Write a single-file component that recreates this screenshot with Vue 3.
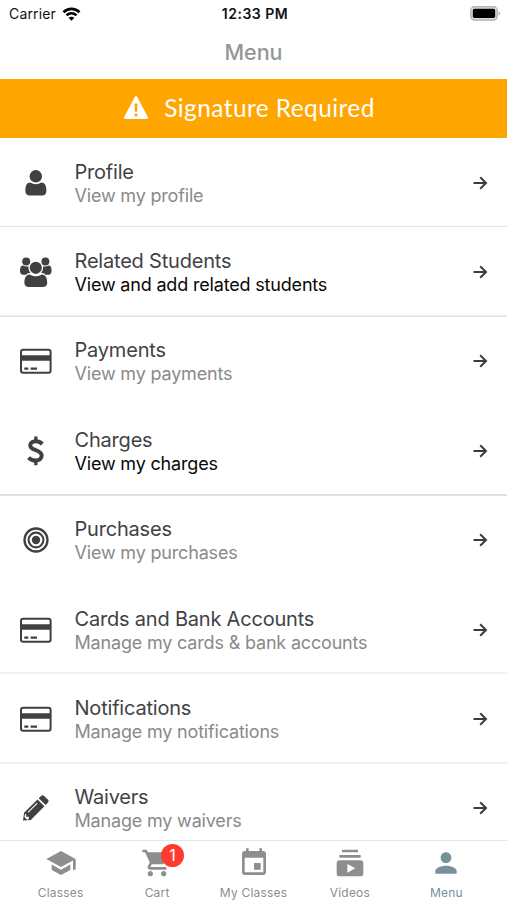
<script setup>
import { ref } from 'vue'

const items = [
  { icon: 'user', title: 'Profile', sub: 'View my profile', line: 'thin' },
  { icon: 'users', title: 'Related Students', sub: 'View and add related students', dark: true, line: 'mid' },
  { icon: 'card', title: 'Payments', sub: 'View my payments' },
  { icon: 'dollar', title: 'Charges', sub: 'View my charges', dark: true, line: 'thick' },
  { icon: 'target', title: 'Purchases', sub: 'View my purchases' },
  { icon: 'card', title: 'Cards and Bank Accounts', sub: 'Manage my cards & bank accounts', line: 'soft' },
  { icon: 'card', title: 'Notifications', sub: 'Manage my notifications', line: 'soft' },
  { icon: 'pencil', title: 'Waivers', sub: 'Manage my waivers' }
]

const tabs = [
  { name: 'Classes', path: 'M5 13.18v4L12 21l7-3.82v-4L12 17l-7-3.82zM12 3L1 9l11 6 9-4.91V17h2V9L12 3z' },
  { name: 'Cart', badge: 1, path: 'M7 18c-1.1 0-1.99.9-1.99 2S5.9 22 7 22s2-.9 2-2-.9-2-2-2zM1 2v2h2l3.6 7.59-1.35 2.45c-.16.28-.25.61-.25.96 0 1.1.9 2 2 2h12v-2H7.42c-.14 0-.25-.11-.25-.25l.03-.12.9-1.63h7.45c.75 0 1.41-.41 1.75-1.03l3.58-6.49c.08-.14.12-.31.12-.48 0-.55-.45-1-1-1H5.21l-.94-2H1zm16 16c-1.1 0-1.99.9-1.99 2s.89 2 1.99 2 2-.9 2-2-.9-2-2-2z' },
  { name: 'My Classes', path: 'M17 12h-5v5h5v-5zM16 1v2H8V1H6v2H5c-1.11 0-1.99.9-1.99 2L3 19c0 1.1.89 2 2 2h14c1.1 0 2-.9 2-2V5c0-1.1-.9-2-2-2h-1V1h-2zm3 18H5V8h14v11z' },
  { name: 'Videos', path: 'M20 8H4V6h16v2zm-2-6H6v2h12V2zm4 10v8c0 1.1-.9 2-2 2H4c-1.1 0-2-.9-2-2v-8c0-1.1.9-2 2-2h16c1.1 0 2 .9 2 2zm-6 4l-6-3.27v6.53L16 16z' },
  { name: 'Menu', path: 'M12 12c2.21 0 4-1.79 4-4s-1.79-4-4-4-4 1.79-4 4 1.79 4 4 4zm0 2c-2.67 0-8 1.34-8 4v2h16v-2c0-2.66-5.33-4-8-4z' }
]

const active = ref('Menu')
</script>

<template>
  <div class="screen">
    <div class="status">
      <div class="carrier">
        <span>Carrier</span>
        <svg width="19" height="14" viewBox="0 0 18 14" fill="none" stroke="#000" stroke-width="2.6">
          <path d="M1 5.2C5.5.8 12.5.8 17 5.2" />
          <path d="M4 8.4c2.9-2.7 7.1-2.7 10 0" />
          <path d="M9 13.8l-2.9-3c1.7-1.5 4.1-1.5 5.8 0z" fill="#000" stroke="none" />
        </svg>
      </div>
      <div class="time">12:33 PM</div>
      <div class="battery">
        <svg width="31" height="15" viewBox="0 0 31 15">
          <rect x=".8" y=".8" width="26.4" height="13.2" rx="3.8" fill="#ddd" stroke="#b5b5b5" stroke-width="1.5" />
          <rect x="2.8" y="2.8" width="22.4" height="9.2" rx="1.8" fill="#000" />
          <path d="M28.6 5.2c2 .8 2 3.6 0 4.4z" fill="#aaa" />
        </svg>
      </div>
    </div>

    <h1 class="title">Menu</h1>

    <div class="banner">
      <svg width="26" height="25" viewBox="0 0 26 25">
        <path d="M13 2.2L24 22.8H2z" fill="#fff" stroke="#fff" stroke-width="2.4" stroke-linejoin="round" />
        <path d="M11.5 8.5h3l-.5 8.3h-2z" fill="#ffa500" />
        <rect x="11.6" y="18.6" width="2.8" height="2.7" fill="#ffa500" />
      </svg>
      <span>Signature Required</span>
    </div>

    <main class="list">
      <div v-for="item in items" :key="item.title" class="row" :class="item.line">
        <svg class="icon" width="36" height="36" viewBox="0 0 36 36" fill="#404042">
          <template v-if="item.icon === 'user'">
            <circle cx="17.8" cy="11.3" r="6.2" />
            <path d="M7.4 26c0-5 1.2-8.4 5-8.4 1.6 1.1 3.500 1.700 5.400 1.700s3.800-.6 5.400-1.700c3.800 0 5.200 3.400 5.200 8.400 0 2.600-1.600 4.400-3.700 4.400H11.100c-2.100 0-3.700-1.800-3.700-4.400z" />
          </template>
          <template v-else-if="item.icon === 'users'">
            <circle cx="8.2" cy="7.4" r="4" />
            <circle cx="27.4" cy="7.4" r="4" />
            <path d="M2 16.8c0-3.300.9-5.300 2.900-5.300 2.100 1.300 4.200 1.300 5.600.8-.2 3 .4 4.800 2 6.500-1.900 0-3.300.7-4.300 1.900H5c-2 0-3-1.500-3-3.900zM33.600 16.800c0-3.300-.9-5.300-2.900-5.300-2.100 1.300-4.200 1.300-5.600.8.2 3-.4 4.800-2 6.500 1.900 0 3.300.7 4.300 1.900h3.200c2 0 3-1.500 3-3.900z" />
            <circle cx="17.8" cy="13.8" r="6.1" />
            <path d="M6.4 29c0-5.100 1.400-8.600 5.300-8.600 1.800 1.200 3.900 1.800 6.100 1.800s4.300-.6 6.100-1.800c3.900 0 5.300 3.500 5.300 8.600 0 2.300-1.500 3.900-3.600 3.900H10c-2.100 0-3.600-1.600-3.600-3.900z" />
          </template>
          <template v-else-if="item.icon === 'card'">
            <rect x="3" y="6.8" width="29.6" height="23" rx="2.2" fill="none" stroke="#404042" stroke-width="2" />
            <path d="M3 12.2h29.600v5.500H3zM6.300 24.500h4v2.200h-4zM12.600 24.500h6.400v2.200h-6.400z" />
          </template>
          <template v-else-if="item.icon === 'dollar'">
            <path d="M24.300 11C22.500 9.200 20.300 8.300 17.700 8.300c-3.200 0-5.400 1.600-5.400 4.100 0 5.700 11.400 3.600 11.400 10.200 0 3.100-2.400 5-6 5-3.100 0-5.400-1.100-7.200-3" fill="none" stroke="#404042" stroke-width="4" />
            <path d="M16.200 3.500h3.300v4.500h-3.300zM16.200 28h3.300v4.300h-3.300z" />
          </template>
          <template v-else-if="item.icon === 'target'">
            <circle cx="18" cy="18" r="11.5" fill="none" stroke="#404042" stroke-width="2.3" />
            <circle cx="18" cy="18" r="7.4" fill="none" stroke="#404042" stroke-width="2.1" />
            <circle cx="18" cy="18" r="4.2" />
          </template>
          <template v-else>
            <path d="M5 30.600l1.100-7.800L19.500 9.400l6.900 6.900-13.600 13.600zM20.700 8.200l2.300-2.300c1-1 2.100-1 3.100 0l3.700 3.700c1 1 1 2.100 0 3.100l-2.200 2.200z" />
            <path d="M7 24.600l1.200-.8v3h2.600v2.300l-1.700.6-2.700-2.700zM9.600 22l9.300-9.200.7.700-9.300 9.200z" fill="#fff" />
          </template>
        </svg>
        <div class="text">
          <div class="name">{{ item.title }}</div>
          <div class="sub" :class="{ dark: item.dark }">{{ item.sub }}</div>
        </div>
        <svg class="arrow" width="16" height="16" viewBox="0 0 16 16" fill="none" stroke="#3c3c3e" stroke-width="2">
          <path d="M1.500 8h12M8.200 2.200L14 8l-5.800 5.800" />
        </svg>
      </div>
    </main>

    <nav class="tabs">
      <div v-for="tab in tabs" :key="tab.name" class="tab" :class="{ active: tab.name === active }" @click="active = tab.name">
        <div class="tab-icon">
          <svg width="32" height="32" viewBox="0 0 24 24" fill="currentColor"><path :d="tab.path" /></svg>
          <span v-if="tab.badge" class="badge">{{ tab.badge }}</span>
        </div>
        <div class="label">{{ tab.name }}</div>
      </div>
    </nav>
  </div>
</template>

<style>
body {
  margin: 0;
  background: #fff;
}
</style>

<style scoped>
.screen {
  display: flex;
  flex-direction: column;
  width: 507px;
  height: 900px;
  overflow: hidden;
  background: #fff;
  font-family: Inter, "Liberation Sans", sans-serif;
}

.status {
  display: grid;
  grid-template-columns: 1fr auto 1fr;
  align-items: center;
  height: 27px;
  padding: 0 6px 0 9px;
  font-size: 14px;
  color: #111;
}

.carrier {
  display: flex;
  align-items: center;
  gap: 6px;
  letter-spacing: 0.15px;
}

.time {
  font-weight: 600;
  letter-spacing: 0.5px;
}

.battery {
  display: flex;
  justify-content: flex-end;
}

.title {
  height: 52px;
  margin: 0;
  line-height: 51px;
  text-align: center;
  font-size: 21.5px;
  font-weight: 500;
  color: #969696;
}

.banner {
  display: flex;
  flex: none;
  align-items: center;
  justify-content: center;
  gap: 15px;
  height: 58.5px;
  padding: 0 9px 1px 0;
  box-sizing: border-box;
  background: #ffa500;
  color: #fff;
  font-family: Lato, sans-serif;
  font-size: 24.5px;
  letter-spacing: 0.4px;
}

.list {
  flex: 1;
  min-height: 0;
  padding-top: 0.5px;
  overflow: hidden;
}

.row {
  display: flex;
  align-items: center;
  height: 89.4px;
  padding: 0 19px 0 18px;
  box-sizing: border-box;
}

.thin {
  box-shadow: inset 0 -1px #e4e4e4;
}

.mid {
  box-shadow: inset 0 -1.5px #e2e2e2;
}

.thick {
  box-shadow: inset 0 -2px #e0e0e0;
}

.soft {
  box-shadow: inset 0 -2px #f0f0f0;
}

.text {
  flex: 1;
  margin-left: 20.5px;
  padding-top: 1px;
  white-space: nowrap;
}

.name {
  font-size: 20px;
  line-height: 24px;
  letter-spacing: -0.2px;
  color: #424244;
}

.sub {
  font-size: 18px;
  line-height: 23px;
  letter-spacing: -0.18px;
  color: #8a8a8a;
}

.sub.dark {
  color: #080808;
}

.tabs {
  display: flex;
  flex: none;
  height: 60px;
  padding: 0 12.5px;
  box-sizing: border-box;
  border-top: 1px solid #e6e6e6;
  background: #fff;
}

.tab {
  display: flex;
  flex: 1;
  flex-direction: column;
  align-items: center;
  padding-top: 6px;
  color: #8e8e8e;
}

.tab-icon {
  position: relative;
  height: 32px;
}

.badge {
  position: absolute;
  top: -3px;
  right: -11px;
  width: 23px;
  height: 23px;
  border-radius: 50%;
  background: #ff3b30;
  color: #fff;
  font-size: 16px;
  line-height: 23px;
  text-align: center;
}

.label {
  margin-top: 6px;
  font-size: 12px;
  line-height: 16px;
  letter-spacing: 0.2px;
  white-space: nowrap;
}

.active {
  color: #78909c;
}
</style>
